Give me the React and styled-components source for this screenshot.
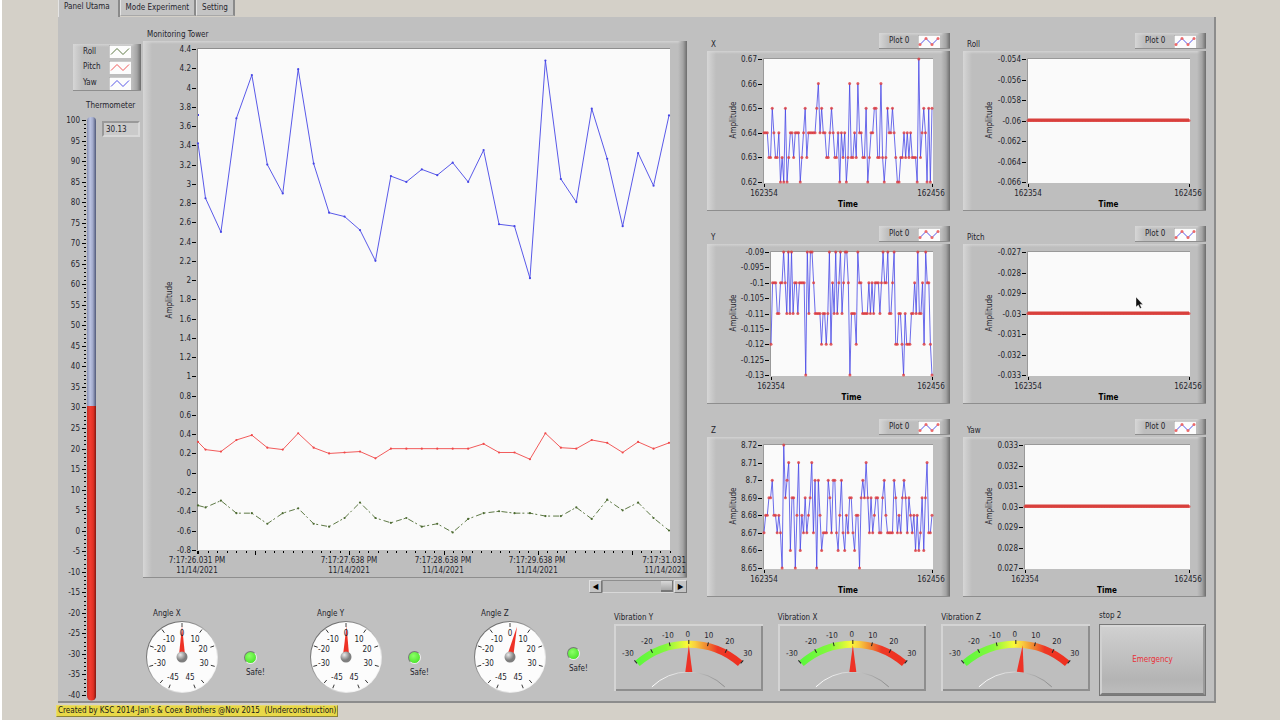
import React, { useState } from "react";
import styled, { createGlobalStyle, css } from "styled-components";

const BLUE = "#4646e6";
const RED = "#f04848";
const GREEN = "#4c6a30";

const towerYaw = [3.42, 2.85, 2.5, 3.68, 4.13, 3.2, 2.9, 4.19, 3.21, 2.7, 2.66, 2.52, 2.2, 3.08, 3.02, 3.15, 3.09, 3.22, 3.02, 3.35, 2.58, 2.56, 2.02, 4.28, 3.05, 2.81, 3.78, 3.26, 2.56, 3.32, 2.98, 3.71];
const towerPitch = [0.32, 0.24, 0.22, 0.34, 0.39, 0.26, 0.24, 0.41, 0.26, 0.2, 0.21, 0.22, 0.15, 0.25, 0.25, 0.25, 0.25, 0.25, 0.25, 0.3, 0.21, 0.21, 0.14, 0.41, 0.26, 0.25, 0.34, 0.31, 0.21, 0.32, 0.25, 0.31];
const towerRoll = [-0.34, -0.36, -0.29, -0.42, -0.42, -0.53, -0.42, -0.37, -0.53, -0.56, -0.47, -0.31, -0.47, -0.52, -0.47, -0.56, -0.53, -0.62, -0.48, -0.42, -0.4, -0.42, -0.42, -0.45, -0.45, -0.36, -0.48, -0.28, -0.39, -0.31, -0.47, -0.6];

const towerTimes = [
  { x: 54, time: "7:17:26.031 PM" },
  { x: 206, time: "7:17:27.638 PM" },
  { x: 300, time: "7:17:28.638 PM" },
  { x: 394, time: "7:17:29.638 PM" },
  { x: 543, time: "7:17:31.031", anchor: "end" }
];

// one digit per sample, counted up from the bottom of the scale
const samplesX =
  "2221132112010301221222012312222234232211232112021201411214221130122331141013223210011212121110512320303";
const samplesY =
  "1333223343242423323333042443222212212413242342344302221433222232323332343342234112210211122324223143310";
const samplesZ =
  "2334453323207456144036132423462505312225425521352132442133045464242344224532222542324542432313124146223";
const flat = "1".repeat(103);

const plots = [
  { name: "X", labels: ["0.67", "0.66", "0.65", "0.64", "0.63", "0.62"], samples: samplesX, steps: 5, left: 57, right: 225 },
  { name: "Roll", labels: ["-0.054", "-0.056", "-0.058", "-0.06", "-0.062", "-0.064", "-0.066"], samples: flat, steps: 2, left: 65, right: 226 },
  { name: "Y", labels: ["-0.09", "-0.095", "-0.1", "-0.105", "-0.11", "-0.115", "-0.12", "-0.125", "-0.13"], samples: samplesY, steps: 4, left: 64, right: 225 },
  { name: "Pitch", labels: ["-0.027", "-0.028", "-0.029", "-0.03", "-0.031", "-0.032", "-0.033"], samples: flat, steps: 2, left: 65, right: 226, pointer: true },
  { name: "Z", labels: ["8.72", "8.71", "8.7", "8.69", "8.68", "8.67", "8.66", "8.65"], samples: samplesZ, steps: 7, left: 57, right: 225 },
  { name: "Yaw", labels: ["0.033", "0.032", "0.031", "0.03", "0.029", "0.028", "0.027"], samples: flat, steps: 2, left: 62, right: 226 }
];

const range = n => Array.from({ length: n }, (_, i) => i);

const Swatch = ({ color, dots }) => (
  <SwatchBox viewBox="0 0 22 13" aria-hidden="true">
    <rect width="22" height="13" fill="#fcfcfc" />
    <path d="M0 13V0H22" fill="none" stroke="#999" />
    <path d="M2 9.500L8 3.500L14 9.500L20 3.500" fill="none" stroke={color} strokeOpacity="0.900" />
    {dots &&
      [[2, 9.5], [8, 3.5], [14, 9.5], [20, 3.5]].map(([x, y]) => (
        <circle key={x} cx={x} cy={y} r="1.500" fill="#ec6a6a" />
      ))}
  </SwatchBox>
);

const TowerChart = () => {
  const top = 8;
  const unit = 96.3;
  const px = i => (i === 0 ? 55 : 62.5 + 15.45 * (i - 1));
  const py = v => top + (4.4 - v) * unit;
  const line = data => data.map((v, i) => `${px(i)},${py(v)}`).join(" ");
  const series = [
    { data: towerYaw, color: BLUE },
    { data: towerPitch, color: RED },
    { data: towerRoll, color: GREEN, dash: "6 2 2 3" }
  ];
  return (
    <Drawing viewBox="0 0 544 537" role="img" aria-label="Monitoring Tower">
      <rect x="55" y="8" width="472" height="501" fill="#fafafa" />
      <path d="M54.500 509V7.500H527" fill="none" stroke="#8e8e8e" />
      {range(27).map(i => {
        const v = 4.4 - i * 0.2;
        return (
          <g key={i}>
            <text x="48" y={py(v) + 3} textAnchor="end">
              {String(Math.round(v * 10) / 10 || 0)}
            </text>
            <rect x="49" y={Math.round(py(v))} width="4" height="1" />
          </g>
        );
      })}
      {range(50).map(i => {
        const x = Math.round(65 + i * 9.42);
        const major = i % 10 === 5;
        return <rect key={i} x={x} y="510" width="1" height={major ? 4 : 2} />;
      })}
      <rect x="54" y="510" width="2" height="3" />
      {towerTimes.map(t => (
        <g key={t.time} textAnchor={t.anchor || "middle"}>
          <text x={t.x} y="522">{t.time}</text>
          <text x={t.x} y="532">11/14/2021</text>
        </g>
      ))}
      <text transform="translate(29 259) rotate(-90)" textAnchor="middle">Amplitude</text>
      <rect x="55" y="73" width="1" height="2" fill={BLUE} />
      {series.map(s => (
        <g key={s.color}>
          <polyline points={line(s.data)} fill="none" stroke={s.color} strokeWidth="0.900" strokeDasharray={s.dash} />
          {s.data.map((v, i) => (
            <circle key={i} cx={px(i)} cy={py(v)} r="1.100" fill={s.color} />
          ))}
        </g>
      ))}
    </Drawing>
  );
};

const PlotChart = ({ plot }) => {
  const { labels, samples, steps, left, right } = plot;
  const top = 8;
  const bottom = 131;
  const points = samples.split("").map((d, i) => [
    left + (i * (right - left)) / 102,
    bottom - (Number(d) * (bottom - top)) / steps
  ]);
  return (
    <Drawing viewBox="0 0 243 160" role="img" aria-label={`${plot.name} plot`}>
      <rect x={left} y={top} width={right - left + 1} height="124" fill="#fafafa" />
      <path d={`M${left - 0.5} 132V7.500H${right + 1}`} fill="none" stroke="#999" />
      {labels.map((label, i) => {
        const y = top + (i * (bottom - top)) / (labels.length - 1);
        return (
          <g key={label}>
            <text x={left - 7} y={y + 3} textAnchor="end">{label}</text>
            <rect x={left - 6} y={Math.round(y)} width="4" height="1" />
          </g>
        );
      })}
      <rect x={left} y="133" width="1" height="3" />
      <rect x={right} y="133" width="1" height="3" />
      <text x={left} y="145" textAnchor="middle">162354</text>
      <text x={right - 1} y="145" textAnchor="middle">162456</text>
      <text className="strong" x={(left + right) / 2} y="156" textAnchor="middle">Time</text>
      <text transform="translate(29 69) rotate(-90)" textAnchor="middle">Amplitude</text>
      <polyline points={points.map(p => p.join(",")).join(" ")} fill="none" stroke={BLUE} strokeWidth="0.800" />
      {points.map(([x, y]) => (
        <circle key={x} cx={x} cy={y} r="1.500" fill="#e03c3c" fillOpacity="0.800" />
      ))}
      {samples === flat && <path d={`M${left} 69H${right}`} stroke="#d8403c" strokeWidth="3" />}
      {plot.pointer && (
        <path d="M173 53v10l2.300-2l1.700 3.500l1.500-.7l-1.600-3.400h3z" fill="#111" stroke="#fff" strokeWidth="0.400" />
      )}
    </Drawing>
  );
};

const Thermometer = () => {
  const py = v => 8 + (100 - v) * 4.107;
  return (
    <ThermoScale viewBox="0 0 40 589" role="img" aria-label="Thermometer scale">
      <defs>
        <linearGradient id="glass">
          <stop offset="0" stopColor="#8890b4" />
          <stop offset="0.350" stopColor="#bcc4e2" />
          <stop offset="0.650" stopColor="#a2aacb" />
          <stop offset="1" stopColor="#4f5878" />
        </linearGradient>
        <linearGradient id="mercury">
          <stop offset="0" stopColor="#c43028" />
          <stop offset="0.350" stopColor="#f23c30" />
          <stop offset="0.700" stopColor="#e03024" />
          <stop offset="1" stopColor="#84180f" />
        </linearGradient>
      </defs>
      {range(29).map(i => (
        <g key={i}>
          <text x="20" y={py(100 - i * 5) + 3} textAnchor="end">{100 - i * 5}</text>
          <rect x="22" y={Math.round(py(100 - i * 5))} width="4" height="1" />
        </g>
      ))}
      {range(141).map(i => (
        <rect key={i} x="24" y={Math.round(py(100 - i))} width="2" height="1" />
      ))}
      <rect x="27" y="5" width="9" height="583" rx="4" fill="url(#glass)" />
      <path d="M27 294H36V584A4.500 4.500 0 0 1 27 584Z" fill="url(#mercury)" />
    </ThermoScale>
  );
};

const dialNumbers = [
  ["0", 36, 14], ["10", 49, 20], ["20", 57, 30], ["30", 58, 44], ["45", 44, 58],
  ["-45", 27, 58], ["-30", 14, 44], ["-20", 14, 30], ["-10", 23, 20]
];

const Dial = ({ name, value }) => (
  <DialBox viewBox="0 0 74 74" role="img" aria-label={name}>
    <defs>
      <linearGradient id="rim" x2="1" y2="1">
        <stop offset="0.200" stopColor="#6e6e6e" />
        <stop offset="0.800" stopColor="#f4f4f4" />
      </linearGradient>
      <radialGradient id="hub" cx="0.350" cy="0.300">
        <stop offset="0" stopColor="#e8e8e8" />
        <stop offset="1" stopColor="#7e7e7e" />
      </radialGradient>
    </defs>
    <circle cx="36" cy="37" r="36" fill="url(#rim)" />
    <circle cx="36" cy="37" r="35" fill="#fcfcfc" />
    {[-157, -140, -106, -71, -36, 0, 36, 71, 106, 140, 157].map(a => (
      <path key={a} d="M36 3v4" stroke="#333" strokeWidth="0.900" transform={`rotate(${a} 36 37)`} />
    ))}
    <path d="M36 6L33 35H39Z" fill="#ee3226" transform={`rotate(${value} 36 37)`} />
    {dialNumbers.map(([n, x, y]) => (
      <text key={n} x={x} y={y + 2} textAnchor="middle">{n}</text>
    ))}
    <circle cx="36" cy="37" r="5.500" fill="url(#hub)" />
  </DialBox>
);

const meterNumbers = [
  ["-30", 14, 30], ["-20", 33, 18], ["-10", 54, 12], ["0", 74, 11],
  ["10", 95, 12], ["20", 116, 18], ["30", 134, 30]
];

const Meter = ({ name, value = 0 }) => (
  <Drawing viewBox="0 0 149 67" role="img" aria-label={name}>
    <defs>
      <linearGradient id="danger">
        <stop offset="0" stopColor="#5cf83c" />
        <stop offset="0.280" stopColor="#84f83c" />
        <stop offset="0.480" stopColor="#fafa38" />
        <stop offset="0.560" stopColor="#f8d040" />
        <stop offset="0.680" stopColor="#f08030" />
        <stop offset="0.780" stopColor="#ee3826" />
        <stop offset="1" stopColor="#ee3020" />
      </linearGradient>
      <linearGradient id="groove">
        <stop offset="0" stopColor="#fff" />
        <stop offset="0.500" stopColor="#d0d0d0" />
        <stop offset="1" stopColor="#888" />
      </linearGradient>
    </defs>
    <path d="M23.500 39.500A78.500 78.500 0 0 1 126.500 39.500" fill="none" stroke="url(#danger)" strokeWidth="7" />
    {range(7).map(i => (
      <path key={i} d="M75 16v4" stroke="#222" transform={`rotate(${(i - 3) * 13.7} 75 99)`} />
    ))}
    {meterNumbers.map(([n, x, y]) => (
      <text key={n} x={x} y={y + 2} textAnchor="middle">{n}</text>
    ))}
    <path d="M38 63A52 52 0 0 1 111 63" fill="none" stroke="url(#groove)" />
    <path d="M75 21L71.500 48H78.500Z" fill="#ee3226" transform={`rotate(${value} 75 99)`} />
  </Drawing>
);

const AngleGauge = ({ name, value, near }) => (
  <Angle>
    <Caption $indent={7}>{name}</Caption>
    <AngleRow $near={near}>
      <Dial name={name} value={value} />
      <Status $near={near}>
        <Led />
        Safe!
      </Status>
    </AngleRow>
  </Angle>
);

const App = () => {
  const [tab, setTab] = useState("Panel Utama");
  const [position, setPosition] = useState(100);

  return (
    <Page>
      <GlobalStyle />
      <Tabs role="tablist">
        {["Panel Utama", "Mode Experiment", "Setting"].map(name => (
          <Tab key={name} role="tab" aria-selected={tab === name} $active={tab === name} onClick={() => setTab(name)}>
            {name}
          </Tab>
        ))}
      </Tabs>
      <Panel>
        <Sidebar>
          <Legend>
            <LegendRow>Roll <Swatch color={GREEN} /></LegendRow>
            <LegendRow>Pitch <Swatch color={RED} /></LegendRow>
            <LegendRow>Yaw <Swatch color={BLUE} /></LegendRow>
          </Legend>
          <ThermoLabel htmlFor="temperature">Thermometer</ThermoLabel>
          <ThermoRow>
            <Thermometer />
            <Readout id="temperature" readOnly value="30.13" />
          </ThermoRow>
        </Sidebar>
        <div>
          <Charts>
            <Tower>
              <Caption $indent={4}>Monitoring Tower</Caption>
              <Bevel>
                <TowerChart />
              </Bevel>
              <Scroll>
                <ScrollButton aria-label="Scroll back" onClick={() => setPosition(0)}>◀</ScrollButton>
                <ScrollTrack
                  type="range"
                  aria-label="Chart history"
                  value={position}
                  onChange={e => setPosition(Number(e.target.value))}
                />
                <ScrollButton aria-label="Scroll forward" onClick={() => setPosition(100)}>▶</ScrollButton>
              </Scroll>
            </Tower>
            <Plots>
              {plots.map(plot => (
                <section key={plot.name}>
                  <PlotHeader>
                    <span>{plot.name}</span>
                    <PlotLegend>
                      Plot 0 <Swatch color={BLUE} dots />
                    </PlotLegend>
                  </PlotHeader>
                  <Bevel>
                    <PlotChart plot={plot} />
                  </Bevel>
                </section>
              ))}
            </Plots>
          </Charts>
          <Gauges>
            <Angles>
              <AngleGauge name="Angle X" value={0} />
              <AngleGauge name="Angle Y" value={1} />
              <AngleGauge name="Angle Z" value={13} near />
            </Angles>
            <Meters>
              {[["Vibration Y", 0], ["Vibration X", 0], ["Vibration Z", 5]].map(([name, value]) => (
                <div key={name}>
                  <Caption>{name}</Caption>
                  <MeterFrame>
                    <Meter name={name} value={value} />
                  </MeterFrame>
                </div>
              ))}
            </Meters>
            <Stop>
              <StopLabel id="stop-label">stop 2</StopLabel>
              <Emergency aria-describedby="stop-label">Emergency</Emergency>
            </Stop>
          </Gauges>
        </div>
      </Panel>
      <Credit>Created by KSC 2014-Jan's &amp; Coex Brothers @Nov 2015&nbsp; (Underconstruction)</Credit>
    </Page>
  );
};

const GlobalStyle = createGlobalStyle`
  * {
    box-sizing: border-box;
  }
  body {
    margin: 0;
    background: #d4d0c8;
  }
  body, button, input {
    font: 8px/12px "DejaVu Sans Condensed", "DejaVu Sans", sans-serif;
    color: #24242c;
  }
  text {
    font-size: 8px;
    fill: #24242c;
  }
  .strong {
    font-weight: bold;
    fill: #000;
  }
`;

const Page = styled.div`
  min-height: 100vh;
  padding: 0 64px 0 54px;
  border-left: 2px solid #fff;
  background: #d4d0c8;
`;

const Tabs = styled.div`
  display: flex;
  align-items: flex-start;
  height: 17px;
  padding-left: 2px;
`;

const Tab = styled.button`
  height: 16px;
  padding: 0 5px;
  border: 0;
  border-left: 1px solid #e4e4e4;
  border-right: 2px solid #8a8a8a;
  border-bottom: 1px solid #a8a8a8;
  background: #c4c4c4;
  ${props =>
    props.$active &&
    css`
      height: 17px;
      padding: 0 8px 4px 5px;
      border-bottom: 0;
      background: #c0c0c0;
    `}
`;

const Panel = styled.main`
  display: grid;
  grid-template-columns: 85px 1fr;
  margin-left: 2px;
  padding-right: 8px;
  border-right: 2px solid #8c8c8c;
  border-bottom: 2px solid #8c8c8c;
  background: #c0c0c0;
`;

const Sidebar = styled.aside`
  padding-top: 27px;
`;

const raised = css`
  background:
    linear-gradient(to right, #d6d6d6, transparent 9px),
    linear-gradient(to left, #6c6c6c, #a4a4a4 4px, transparent 9px),
    linear-gradient(to bottom, #d2d2d2, transparent 3px),
    #bebebe;
  box-shadow: inset 0 -1px #8e8e8e;
`;

const Legend = styled.div`
  ${raised}
  margin: 0 2px 0 15px;
  padding: 0 10px;
`;

const LegendRow = styled.div`
  display: flex;
  justify-content: space-between;
  align-items: center;
  height: 16px;
  &:first-child {
    height: 15px;
  }
`;

const SwatchBox = styled.svg`
  display: block;
  width: 22px;
  height: 13px;
`;

const ThermoLabel = styled.label`
  display: block;
  margin-top: 9px;
  padding-left: 28px;
`;

const ThermoRow = styled.div`
  display: flex;
  align-items: flex-start;
  gap: 2px;
  padding-left: 2px;
`;

const ThermoScale = styled.svg`
  display: block;
  flex: none;
  width: 40px;
  height: 589px;
`;

const Readout = styled.input`
  width: 38px;
  height: 16px;
  margin-top: 9px;
  padding: 0 2px;
  border: 2px solid;
  border-color: #999 #d8d8d8 #d8d8d8 #999;
  border-radius: 0;
  background: #cacaca;
  outline: 0;
`;

const Charts = styled.div`
  display: grid;
  grid-template-columns: 544fr 499fr;
  gap: 20px;
`;

const Tower = styled.section`
  padding-top: 12px;
`;

const Caption = styled.div`
  padding-left: ${props => props.$indent || 0}px;
  white-space: nowrap;
`;

const Bevel = styled.div`
  ${raised}
`;

const Drawing = styled.svg`
  display: block;
  width: 100%;
  height: auto;
`;

const Scroll = styled.div`
  display: flex;
  justify-content: flex-end;
  margin-top: 2px;
`;

const ScrollButton = styled.button`
  width: 13px;
  height: 13px;
  padding: 0;
  border: 1px solid;
  border-color: #e0e0e0 #777 #777 #e0e0e0;
  background: #c4c4c4;
  color: #000;
  line-height: 10px;
`;

const ScrollTrack = styled.input`
  appearance: none;
  width: 72px;
  height: 13px;
  margin: 0;
  border: 1px solid;
  border-color: #8e8e8e #b4b4b4 #d8d8d8 #8e8e8e;
  background: #bababa;
  &::-webkit-slider-thumb {
    appearance: none;
    width: 12px;
    height: 11px;
    border-right: 1px solid #777;
    border-bottom: 2px solid #777;
    background: linear-gradient(#d8d8d8, #a8a8a8);
  }
`;

const Plots = styled.div`
  display: grid;
  grid-template-columns: 1fr 1fr;
  gap: 15px 13px;
  padding-top: 16px;
`;

const PlotHeader = styled.header`
  display: flex;
  justify-content: space-between;
  align-items: flex-start;
  height: 18px;
  padding-left: 4px;
  span {
    padding-top: 6px;
  }
`;

const PlotLegend = styled.div`
  ${raised}
  display: flex;
  justify-content: space-between;
  align-items: center;
  width: 71px;
  height: 16px;
  padding: 0 10px;
`;

const Gauges = styled.div`
  display: grid;
  grid-template-columns: 471fr 476fr 116fr;
  margin-top: 11px;
`;

const Angles = styled.div`
  display: grid;
  grid-template-columns: 164fr 164fr 143fr;
`;

const Angle = styled.div`
  padding-left: 3px;
`;

const AngleRow = styled.div`
  display: flex;
  gap: ${props => (props.$near ? 21 : 26)}px;
`;

const DialBox = styled.svg`
  display: block;
  flex: none;
  width: 74px;
  height: 74px;
`;

const Status = styled.div`
  display: flex;
  flex-direction: column;
  align-items: flex-start;
  gap: 3px;
  padding-top: ${props => (props.$near ? 27 : 31)}px;
`;

const Led = styled.span`
  width: 13px;
  height: 13px;
  margin-left: -2px;
  border: 1px solid;
  border-color: #777 #eee #eee #777;
  border-radius: 50%;
  background: radial-gradient(circle at 40% 35%, #8cff68, #52e830 70%, #3cbc24);
`;

const Meters = styled.div`
  display: grid;
  grid-template-columns: repeat(3, 1fr);
  gap: 15px;
  padding-top: 4px;
`;

const MeterFrame = styled.div`
  background: #bebebe;
  box-shadow: inset 2px 2px #d4d4d4, inset -2px -2px #8e8e8e;
`;

const Stop = styled.div`
  padding: 2px 0 0 9px;
`;

const StopLabel = styled.div`
  padding-bottom: 2px;
`;

const Emergency = styled.button`
  width: 100%;
  height: 72px;
  border: 3px solid;
  border-color: #d8d8d8 #9a9a9a #7c7c7c #d0d0d0;
  outline: 1px solid #777;
  outline-offset: -1px;
  background: linear-gradient(#d0d0d0, #b4b4b4 80%, #bcbcbc);
  color: #e83038;
`;

const Credit = styled.footer`
  width: fit-content;
  margin-top: 2px;
  padding: 0 1px;
  border: 1px solid;
  border-color: #e8dc6c #8c8438 #8c8438 #e8dc6c;
  background: #e8d848;
  line-height: 10px;
  color: #181818;
`;

export default App;
